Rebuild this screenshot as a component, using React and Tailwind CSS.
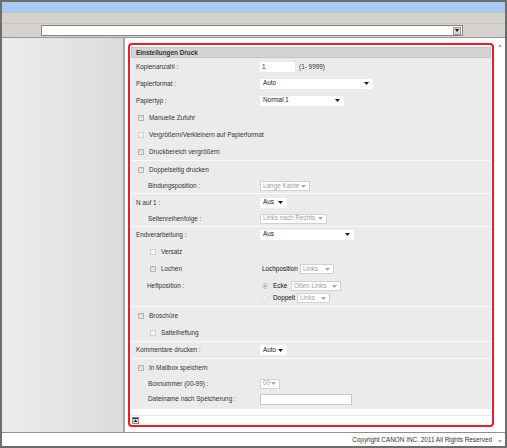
import React from 'react';

const FONT = { fontFamily: '"Liberation Sans", Arial, sans-serif' };

function Arrow({ muted }) {
  return (
    <svg width="5" height="3" viewBox="0 0 5 3" className="shrink-0">
      <path d="M0 0h5L2.5 3z" fill={muted ? '#a8a8a8' : '#1a1a1a'} />
    </svg>
  );
}

function Sel({ w, children, disabled }) {
  return (
    <div
      className={`h-[10px] ${w} bg-white flex items-center justify-between pl-[2px] pr-[3px] border ${
        disabled ? 'border-[#d2d2d2] text-[#a0a0a0]' : 'border-white text-[#222]'
      }`}
    >
      <span className="leading-none">{children}</span>
      <Arrow muted={disabled} />
    </div>
  );
}

function Box({ light }) {
  return (
    <span
      className={`w-[6px] h-[6px] shrink-0 border ${
        light ? 'border-[#d0d0d0] bg-[#f7f7f7]' : 'border-[#b4b4b4] bg-gradient-to-b from-[#d8d8d8] to-[#ececec]'
      }`}
    />
  );
}

function Radio({ checked }) {
  return (
    <span
      className={`w-[6px] h-[6px] shrink-0 rounded-full border flex items-center justify-center ${
        checked ? 'border-[#c4c4c4] bg-[#e6e6e6]' : 'border-[#dcdcdc] bg-[#f4f4f4]'
      }`}
    >
      {checked && <span className="w-[2px] h-[2px] rounded-full bg-[#9a9a9a]" />}
    </span>
  );
}

function Row({ label, h, indent, children }) {
  return (
    <div className={`flex items-center ${h}`}>
      <div className={`w-[129px] shrink-0 ${indent ? 'pl-[17px]' : 'pl-[5px]'}`}>{label}</div>
      {children}
    </div>
  );
}

function Check({ label, h, indent, light }) {
  return (
    <div className={`flex items-center gap-[5px] ${h} ${indent ? 'pl-[19px]' : 'pl-[7px]'}`}>
      <Box light={light} />
      <span>{label}</span>
    </div>
  );
}

function Section({ children, first }) {
  return <div className={first ? '' : 'border-t border-[#fafafa]'}>{children}</div>;
}

export default function App() {
  return (
    <div style={FONT} className="w-[507px] h-[448px] border-2 border-[#6e6e6e] flex flex-col bg-white text-[6.4px] text-[#333] overflow-hidden">
      {/* title strips */}
      <div className="h-[10px] bg-[#a7c9f2] shrink-0" />
      <div className="h-[12px] bg-[#d6d2cd] border-t border-[#c6c3bf] border-b border-[#a9a5a0] shrink-0" />
      <div className="h-[14px] bg-[#d6d2cd] border-b border-[#9b9894] flex items-center pl-[39px] shrink-0">
        <div className="w-[422px] h-[11px] bg-white border border-[#858585] flex justify-end items-center pr-[1px]">
          <div className="w-[8px] h-[8px] bg-[#d9d6d1] border border-[#9b9894] flex items-center justify-center">
            <svg width="4" height="3" viewBox="0 0 4 3"><path d="M0 0h4L2 3z" fill="#111" /></svg>
          </div>
        </div>
      </div>

      {/* main */}
      <div className="flex flex-1 min-h-0">
        <div className="w-[121px] shrink-0 bg-gradient-to-r from-[#ececec] to-[#dcdcdc] border-r-2 border-[#a7a7a7] box-content" />
        <div className="flex-1 flex min-w-0">
          <div className="w-[369px] pl-[3px] pt-[5px] pb-[5px] flex">
            <div className="flex-1 border-2 border-[#ee1c24] rounded-[4px] p-[1px] flex flex-col">
              <div className="h-[11px] mt-[1px] bg-[#d4d4d4] border border-[#c4c4c4] font-bold flex items-center pl-[4px]">
                Einstellungen Druck
              </div>
              <div className="bg-[#ebebeb] flex flex-col">
                <Section first>
                  <Row label="Kopienanzahl :" h="h-[17px]">
                    <div className="w-[35px] h-[10px] bg-white flex items-center pl-[2px]">1</div>
                    <span className="ml-[4px]">(1- 9999)</span>
                  </Row>
                  <Row label="Papierformat :" h="h-[17px]">
                    <Sel w="w-[113px]">Auto</Sel>
                  </Row>
                  <Row label="Papiertyp :" h="h-[17px]">
                    <Sel w="w-[84px]">Normal 1</Sel>
                  </Row>
                  <Check label="Manuelle Zufuhr" h="h-[17px]" />
                  <Check label="Vergrößern/Verkleinern auf Papierformat" h="h-[17px]" light />
                  <Check label="Druckbereich vergrößern" h="h-[17px]" />
                </Section>
                <Section>
                  <Check label="Doppelseitig drucken" h="h-[18px]" />
                  <Row label="Bindungsposition :" h="h-[14px]" indent>
                    <Sel w="w-[50px]" disabled>Lange Kante</Sel>
                  </Row>
                </Section>
                <Section>
                  <Row label="N auf 1 :" h="h-[17px]">
                    <Sel w="w-[27px]">Aus</Sel>
                  </Row>
                  <Row label="Seitenreihenfolge :" h="h-[15px]" indent>
                    <Sel w="w-[67px]" disabled>Links nach Rechts</Sel>
                  </Row>
                </Section>
                <Section>
                  <Row label="Endverarbeitung :" h="h-[15px]">
                    <Sel w="w-[94px]">Aus</Sel>
                  </Row>
                  <Check label="Versatz" h="h-[19px]" indent light />
                  <div className="flex items-center h-[16px]">
                    <div className="w-[131px] shrink-0 pl-[19px] flex items-center gap-[5px]">
                      <Box />
                      <span>Lochen</span>
                    </div>
                    <span className="text-[#111] w-[38px]">Lochposition</span>
                    <Sel w="w-[34px]" disabled>Links</Sel>
                  </div>
                  <div className="flex pt-[3px] pb-[2px]">
                    <div className="w-[131px] shrink-0 pl-[16px] h-[12px] flex items-center">Heftposition :</div>
                    <div className="flex flex-col">
                      <div className="h-[12px] flex items-center gap-[5px]">
                        <Radio checked />
                        <span className="text-[#111] w-[13px]">Ecke</span>
                        <Sel w="w-[50px]" disabled>Oben Links</Sel>
                      </div>
                      <div className="h-[12px] flex items-center gap-[5px]">
                        <Radio />
                        <span className="text-[#111] w-[19px]">Doppelt</span>
                        <Sel w="w-[33px]" disabled>Links</Sel>
                      </div>
                    </div>
                  </div>
                </Section>
                <Section>
                  <Check label="Broschüre" h="h-[18px]" />
                  <Check label="Sattelheftung" h="h-[16px]" indent light />
                </Section>
                <Section>
                  <Row label="Kommentare drucken :" h="h-[16px]">
                    <Sel w="w-[27px]">Auto</Sel>
                  </Row>
                </Section>
                <Section>
                  <Check label="In Mailbox speichern" h="h-[17px]" />
                  <Row label="Boxnummer (00-99) :" h="h-[15px]" indent>
                    <Sel w="w-[20px]" disabled>00</Sel>
                  </Row>
                  <Row label="Dateiname nach Speicherung :" h="h-[16px]" indent>
                    <div className="w-[92px] h-[11px] bg-white border border-[#c9c9c9]" />
                  </Row>
                  <div className="h-[2px]" />
                </Section>
              </div>
              <div className="h-[6px]" />
              <div className="border-t border-[#e4e4e4] flex-1 flex items-center pl-[1px]">
                <div className="w-[7px] h-[7px] border border-[#8c8c8c] bg-[#e2e2e2] flex items-center justify-center">
                  <svg width="5" height="5" viewBox="0 0 5 5">
                    <path d="M0 0.5h5" stroke="#222" strokeWidth="1" />
                    <path d="M2.5 1.5L0.5 4h4z" fill="#222" />
                  </svg>
                </div>
              </div>
            </div>
          </div>
          <div className="flex-1 flex justify-center pt-[6px]">
            <svg width="4" height="3" viewBox="0 0 4 3"><path d="M2 0L4 3H0z" fill="#b0b0b0" /></svg>
          </div>
        </div>
      </div>

      {/* footer */}
      <div className="h-[14px] shrink-0 border-t border-[#8f8f8f] flex items-center justify-end">
        <span className="mr-[2px]">Copyright CANON INC. 2011 All Rights Reserved</span>
        <div className="w-[11px] flex justify-center pt-[3px]">
          <svg width="4" height="3" viewBox="0 0 4 3"><path d="M0 0h4L2 3z" fill="#b0b0b0" /></svg>
        </div>
      </div>
    </div>
  );
}
